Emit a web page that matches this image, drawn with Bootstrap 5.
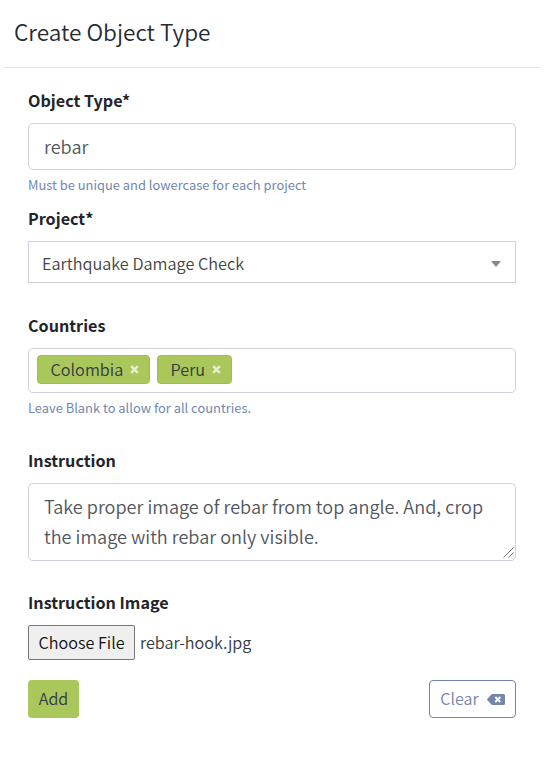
<!DOCTYPE html>
<html lang="en">
<head>
<meta charset="utf-8">
<meta name="viewport" content="width=device-width, initial-scale=1">
<title>Create Object Type</title>
<link href="https://cdn.jsdelivr.net/npm/bootstrap@5.3.0/dist/css/bootstrap.min.css" rel="stylesheet">
<style>
body{font-family:"Noto Sans CJK SC","Noto Sans",sans-serif;font-size:16.1px;line-height:24px;color:#343a40;background:#fff;font-weight:350}
.page-head{margin:0 6px 0 4px;padding:0 10px;height:68px;border-bottom:1px solid #e1e4e6}
.page-title{font-size:22.6px;line-height:30px;padding-top:17px;font-weight:350;color:#272b30}
.form-area{padding:20px 30px 0 28px}
.form-label{font-size:16.15px;line-height:24px;height:24px;font-weight:700;color:#212529;margin-bottom:11px;display:block}
.form-control{border:1px solid #d1d1dc;border-radius:5px;color:#50565d;font-size:18.1px;font-weight:350;line-height:30px;padding:7px 15px 9px}
.form-control.one-line{height:47px}
.hint{font-size:12.9px;line-height:20px;color:#7287ad;margin-top:5px;font-weight:400}
.picker{height:42px;border:1px solid #d1d1dc;padding:2px 14px 0 13px;color:#444;font-size:16.25px}
.caret{width:10px;height:6px;margin-top:2px;background:#888;clip-path:polygon(0 0,100% 0,50% 100%)}
.tag-box{height:45px;padding:6px 8px}
.tag{height:29px;background:#a9c75b;border:1px solid #9fbd50;border-radius:4px;color:#343a40;font-size:16.25px;line-height:27px;padding:0 10px 0 12.5px}
.btn-pick{height:35px;width:107px;border:1px solid #767676;border-radius:2px;background:#efefef;color:#111;font-size:16.2px;font-weight:350;line-height:24px}
.btn-pick span,.file-name,.btn-add span,.btn-clear span{display:block;margin-bottom:2px}
.btn{font-size:16.1px;line-height:24px;height:38px;border-radius:4px;font-weight:350}
.btn-add{background:#a9c75b;color:#343a40;width:51px}
.btn-clear{border:1px solid #7287ad;color:#7287ad;width:87px}
.grip{position:absolute;right:2px;bottom:3px}
.instruction-input{resize:none}
.field-project{margin-top:11px}
.field-project .form-label{margin-bottom:11px}
.field-countries{margin-top:30px}
.field-countries .form-label{margin-bottom:11px}
.tag-first{width:113px;margin-right:7px}
.tag-second{width:75px}
.field-text{margin-top:30px}
.field-text .form-label{margin-bottom:11px}
.field-file{margin-top:29px}
.field-file .form-label{margin-bottom:11px}
.file-name{margin-left:5px;font-size:16.2px}
.actions{margin-top:20px}
</style>
<script src="https://cdn.jsdelivr.net/npm/bootstrap@5.3.0/dist/js/bootstrap.bundle.min.js"></script>
</head>
<body>
<header class="page-head"><h1 class="page-title mb-0">Create Object Type</h1></header>
<form class="form-area">
  <div>
    <label class="form-label" for="otype">Object Type*</label>
    <input class="form-control one-line" id="otype" value="rebar">
    <div class="hint">Must be unique and lowercase for each project</div>
  </div>
  <div class="field-project">
    <label class="form-label">Project*</label>
    <div class="picker d-flex align-items-center justify-content-between"><span>Earthquake Damage Check</span><span class="caret"></span></div>
  </div>
  <div class="field-countries">
    <label class="form-label">Countries</label>
    <div class="form-control tag-box d-flex">
      <span class="tag tag-first d-flex align-items-center"><span>Colombia</span><svg class="ms-auto" width="9" height="9" viewBox="0 0 9 9"><path d="M1.200 1.200l6.600 6.600M7.800 1.200L1.200 7.800" stroke="#e6efcd" stroke-width="2.500"/></svg></span>
      <span class="tag tag-second d-flex align-items-center"><span>Peru</span><svg class="ms-auto" width="9" height="9" viewBox="0 0 9 9"><path d="M1.200 1.200l6.600 6.600M7.800 1.200L1.200 7.800" stroke="#e6efcd" stroke-width="2.500"/></svg></span>
    </div>
    <div class="hint">Leave Blank to allow for all countries.</div>
  </div>
  <div class="field-text">
    <label class="form-label" for="instr">Instruction</label>
    <div class="position-relative">
      <textarea class="form-control instruction-input d-block" id="instr" rows="2">Take proper image of rebar from top angle. And, crop the image with rebar only visible.</textarea>
      <svg class="grip" width="11" height="11" viewBox="0 0 11 11"><path d="M.5 10.500l10-10M5.500 10.500l5-5" stroke="#555" stroke-width=".8"/></svg>
    </div>
  </div>
  <div class="field-file">
    <label class="form-label">Instruction Image</label>
    <div class="d-flex align-items-center"><button type="button" class="btn-pick p-0"><span>Choose File</span></button><span class="file-name">rebar-hook.jpg</span></div>
  </div>
  <div class="actions d-flex justify-content-between">
    <button type="button" class="btn btn-add p-0"><span>Add</span></button>
    <button type="button" class="btn btn-clear p-0 d-flex align-items-center justify-content-center"><span>Clear</span><svg class="ms-2" width="18" height="11" viewBox="0 0 18 11"><path fill="#7287ad" d="M5.600 0H16.500Q18 0 18 1.500V9.500Q18 11 16.500 11H5.600Q4.900 11 4.400 10.500L.4 6.300Q-.2 5.500.4 4.700L4.400.5Q4.900 0 5.600 0Z"/><path d="M8.300 3l5 5M13.300 3l-5 5" stroke="#fff" stroke-width="1.900"/></svg></button>
  </div>
</form>
</body>
</html>
